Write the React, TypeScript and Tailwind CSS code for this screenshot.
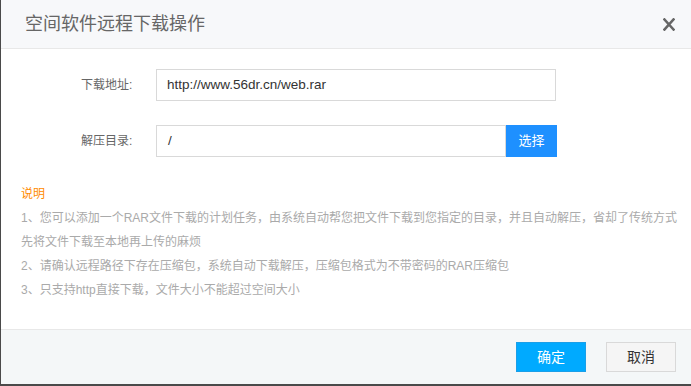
import React from "react";

export default function App() {
  return (
    <div className="w-[691px] h-[386px] bg-[#4a4a4a] font-['Liberation_Sans','Noto_Sans_CJK_SC',sans-serif]">
      <div className="ml-px w-[690px] h-[384px] bg-white flex flex-col">
        {/* Header */}
        <div className="h-[49px] shrink-0 border-b border-[#e8e8e8] bg-[#f7f8fa] flex items-center justify-between pl-[24px] pr-[16px]">
          <span className="text-[18px] leading-none text-[#666]">空间软件远程下载操作</span>
          <svg width="12" height="13" viewBox="0 0 12 13" className="text-[#666]">
            <path d="M1.5 1.5 L10.5 11.5 M10.5 1.5 L1.5 11.5" stroke="currentColor" strokeWidth="2.6" strokeLinecap="square" />
          </svg>
        </div>

        {/* Body */}
        <div className="flex-1 pt-[20px] flex flex-col">
          <div className="flex items-center pl-[80px]">
            <label className="w-[75px] text-[12px] text-[#666]">下载地址:</label>
            <div className="w-[400px] h-[32px] border border-[#d9d9d9] flex items-center pl-[10px] text-[13.5px] text-[#333]">
              http://www.56dr.cn/web.rar
            </div>
          </div>
          <div className="flex items-center pl-[80px] mt-[24px]">
            <label className="w-[75px] text-[12px] text-[#666]">解压目录:</label>
            <div className="w-[350px] h-[32px] border border-[#d9d9d9] flex items-center pl-[11px] text-[13.5px] text-[#333]">
              /
            </div>
            <button className="w-[51px] h-[32px] bg-[#1e90ff] text-white text-[13px] flex items-center justify-center">
              选择
            </button>
          </div>

          <div className="mt-[25px] pl-[20px] text-[12px] leading-[24px]">
            <div className="text-[#ff8a00]">说明</div>
            <div className="text-[#aaa] whitespace-nowrap">
              1、您可以添加一个RAR文件下载的计划任务，由系统自动帮您把文件下载到您指定的目录，并且自动解压，省却了传统方式
              <br />
              先将文件下载至本地再上传的麻烦
            </div>
            <div className="text-[#aaa] whitespace-nowrap">
              2、请确认远程路径下存在压缩包，系统自动下载解压，压缩包格式为不带密码的RAR压缩包
            </div>
            <div className="text-[#aaa] whitespace-nowrap">3、只支持http直接下载，文件大小不能超过空间大小</div>
          </div>
        </div>

        {/* Footer */}
        <div className="h-[55px] shrink-0 border-t border-[#e8e8e8] bg-[#f4f7f8] flex items-center justify-end gap-[20px] pr-[15px]">
          <button className="w-[70px] h-[30px] bg-[#00aaff] border border-[#1a9fe8] text-white text-[14px] flex items-center justify-center">
            确定
          </button>
          <button className="w-[70px] h-[30px] bg-[#f5f5f5] border border-[#d9d9d9] text-[#333] text-[14px] flex items-center justify-center">
            取消
          </button>
        </div>
      </div>
    </div>
  );
}
